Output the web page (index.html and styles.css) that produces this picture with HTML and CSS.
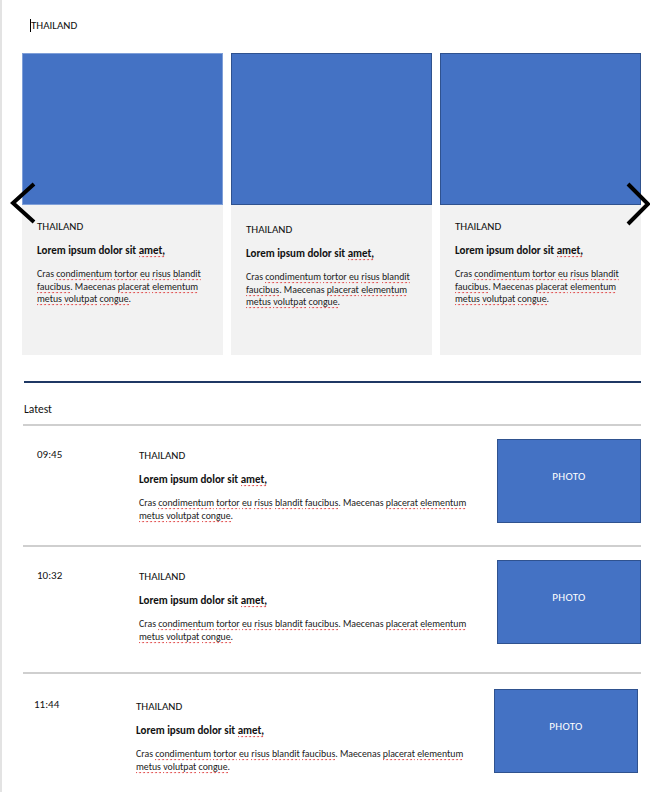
FILE: index.html
```html
<!DOCTYPE html>
<html lang="en">
<head>
  <meta charset="UTF-8">
  <title>Thailand</title>
  <link rel="stylesheet" href="styles.css">
</head>
<body>
  <div class="page">
    <p class="section-title"><span class="cursor"></span>THAILAND</p>

    <div class="carousel">
      <div class="card">
        <div class="card-img first"></div>
        <div class="card-body">
          <p class="tag">THAILAND</p>
          <p class="headline">Lorem ipsum dolor sit <span class="sp">amet,</span></p>
          <p class="text">Cras <span class="sp">condimentum</span> <span class="sp">tortor</span> <span class="sp">eu</span> <span class="sp">risus</span> <span class="sp">blandit</span> <span class="sp">faucibus</span>. Maecenas <span class="sp">placerat</span> <span class="sp">elementum</span> <span class="sp">metus</span> <span class="sp">volutpat</span> <span class="sp">congue</span>.</p>
        </div>
      </div>
      <div class="card">
        <div class="card-img"></div>
        <div class="card-body lower">
          <p class="tag">THAILAND</p>
          <p class="headline">Lorem ipsum dolor sit <span class="sp">amet,</span></p>
          <p class="text">Cras <span class="sp">condimentum</span> <span class="sp">tortor</span> <span class="sp">eu</span> <span class="sp">risus</span> <span class="sp">blandit</span> <span class="sp">faucibus</span>. Maecenas <span class="sp">placerat</span> <span class="sp">elementum</span> <span class="sp">metus</span> <span class="sp">volutpat</span> <span class="sp">congue</span>.</p>
        </div>
      </div>
      <div class="card">
        <div class="card-img"></div>
        <div class="card-body">
          <p class="tag">THAILAND</p>
          <p class="headline">Lorem ipsum dolor sit <span class="sp">amet,</span></p>
          <p class="text">Cras <span class="sp">condimentum</span> <span class="sp">tortor</span> <span class="sp">eu</span> <span class="sp">risus</span> <span class="sp">blandit</span> <span class="sp">faucibus</span>. Maecenas <span class="sp">placerat</span> <span class="sp">elementum</span> <span class="sp">metus</span> <span class="sp">volutpat</span> <span class="sp">congue</span>.</p>
        </div>
      </div>

      <svg class="arrow arrow-left" width="28" height="44" viewBox="0 0 28 44">
        <polyline points="25,2 4,21 25,40" fill="none" stroke="#000" stroke-width="4"/>
      </svg>
      <svg class="arrow arrow-right" width="28" height="44" viewBox="0 0 28 44">
        <polyline points="4,2 24,22 4,42" fill="none" stroke="#000" stroke-width="4"/>
      </svg>
    </div>

    <div class="rule"></div>
    <p class="latest">Latest</p>

    <div class="news">
      <div class="item">
        <p class="time">09:45</p>
        <div class="item-text">
          <p class="tag">THAILAND</p>
          <p class="headline">Lorem ipsum dolor sit <span class="sp">amet,</span></p>
          <p class="text">Cras <span class="sp">condimentum</span> <span class="sp">tortor</span> <span class="sp">eu</span> <span class="sp">risus</span> <span class="sp">blandit</span> <span class="sp">faucibus</span>. Maecenas <span class="sp">placerat</span> <span class="sp">elementum</span> <span class="sp">metus</span> <span class="sp">volutpat</span> <span class="sp">congue</span>.</p>
        </div>
        <div class="photo">PHOTO</div>
      </div>
      <div class="item">
        <p class="time">10:32</p>
        <div class="item-text">
          <p class="tag">THAILAND</p>
          <p class="headline">Lorem ipsum dolor sit <span class="sp">amet,</span></p>
          <p class="text">Cras <span class="sp">condimentum</span> <span class="sp">tortor</span> <span class="sp">eu</span> <span class="sp">risus</span> <span class="sp">blandit</span> <span class="sp">faucibus</span>. Maecenas <span class="sp">placerat</span> <span class="sp">elementum</span> <span class="sp">metus</span> <span class="sp">volutpat</span> <span class="sp">congue</span>.</p>
        </div>
        <div class="photo">PHOTO</div>
      </div>
      <div class="item last">
        <p class="time">11:44</p>
        <div class="item-text">
          <p class="tag">THAILAND</p>
          <p class="headline">Lorem ipsum dolor sit <span class="sp">amet,</span></p>
          <p class="text">Cras <span class="sp">condimentum</span> <span class="sp">tortor</span> <span class="sp">eu</span> <span class="sp">risus</span> <span class="sp">blandit</span> <span class="sp">faucibus</span>. Maecenas <span class="sp">placerat</span> <span class="sp">elementum</span> <span class="sp">metus</span> <span class="sp">volutpat</span> <span class="sp">congue</span>.</p>
        </div>
        <div class="photo">PHOTO</div>
      </div>
    </div>
  </div>
</body>
</html>
```

FILE: styles.css
```css
body {
  margin: 0;
  background: white;
  font-family: Calibri, Carlito, 'Liberation Sans', sans-serif;
  color: #111;
}
p {
  margin: 0;
}
.page {
  width: 650px;
  height: 792px;
  border-left: 2px solid #e3e3e3;
  box-sizing: border-box;
  padding: 19px 9px 0 20px;
  overflow: hidden;
}
.section-title {
  font-size: 11px;
  line-height: 13px;
  margin-left: 8px;
  display: flex;
  align-items: center;
}
.cursor {
  width: 1px;
  height: 13px;
  background: #000;
}
.carousel {
  position: relative;
  margin-top: 21px;
  display: grid;
  grid-template-columns: 201px 201px 201px;
  gap: 8px;
}
.card-img {
  height: 152px;
  background: #4472c4;
  border: 1px solid #2f528f;
  box-sizing: border-box;
}
.card-img.first {
  border-color: #7f9fd8;
}
.card-body {
  background: #f2f2f2;
  height: 150px;
  padding: 15px 10px 0 15px;
  box-sizing: border-box;
}
.card-body.lower {
  padding-top: 18px;
}
.tag {
  font-size: 11px;
  line-height: 14px;
}
.headline {
  font-size: 11px;
  font-weight: bold;
  line-height: 14px;
  margin-top: 10px;
}
.text {
  font-size: 9.8px;
  line-height: 12.5px;
  margin-top: 10px;
  color: #222;
}
.sp {
  padding-bottom: 1px;
  background-image:
    linear-gradient(45deg, transparent 65%, #e04848 80%, transparent 90%),
    linear-gradient(135deg, transparent 5%, #e04848 15%, transparent 35%);
  background-size: 4px 2px;
  background-repeat: repeat-x;
  background-position: 0 100%;
}
.arrow {
  position: absolute;
  top: 129px;
}
.arrow-left {
  left: -13px;
}
.arrow-right {
  right: -11px;
}
.rule {
  margin-top: 26px;
  height: 2px;
  background: #1f3864;
  margin-left: 2px;
}
.latest {
  font-size: 11.5px;
  line-height: 14px;
  margin-top: 19px;
  margin-left: 2px;
}
.news {
  margin-top: 8px;
  border-top: 2px solid #cfcfcf;
  margin-left: 1px;
}
.item {
  display: grid;
  grid-template-columns: 116px 358px 144px;
  height: 121px;
  border-bottom: 2px solid #cfcfcf;
  padding-top: 13px;
  box-sizing: border-box;
}
.item + .item {
  height: 127px;
}
.item.last {
  border-bottom: none;
  margin-left: -3px;
  padding-top: 15px;
}
.time {
  font-size: 11px;
  line-height: 14px;
  margin-top: 9px;
  padding-left: 14px;
}
.item-text {
  padding-top: 10px;
}
.item.last .item-text {
  padding-top: 11px;
}
.item-text .text {
  width: 335px;
}
.photo {
  height: 84px;
  background: #4472c4;
  border: 1px solid #2f528f;
  box-sizing: border-box;
  color: white;
  font-size: 11px;
  text-align: center;
  padding-top: 30px;
  letter-spacing: 0.3px;
}
```
